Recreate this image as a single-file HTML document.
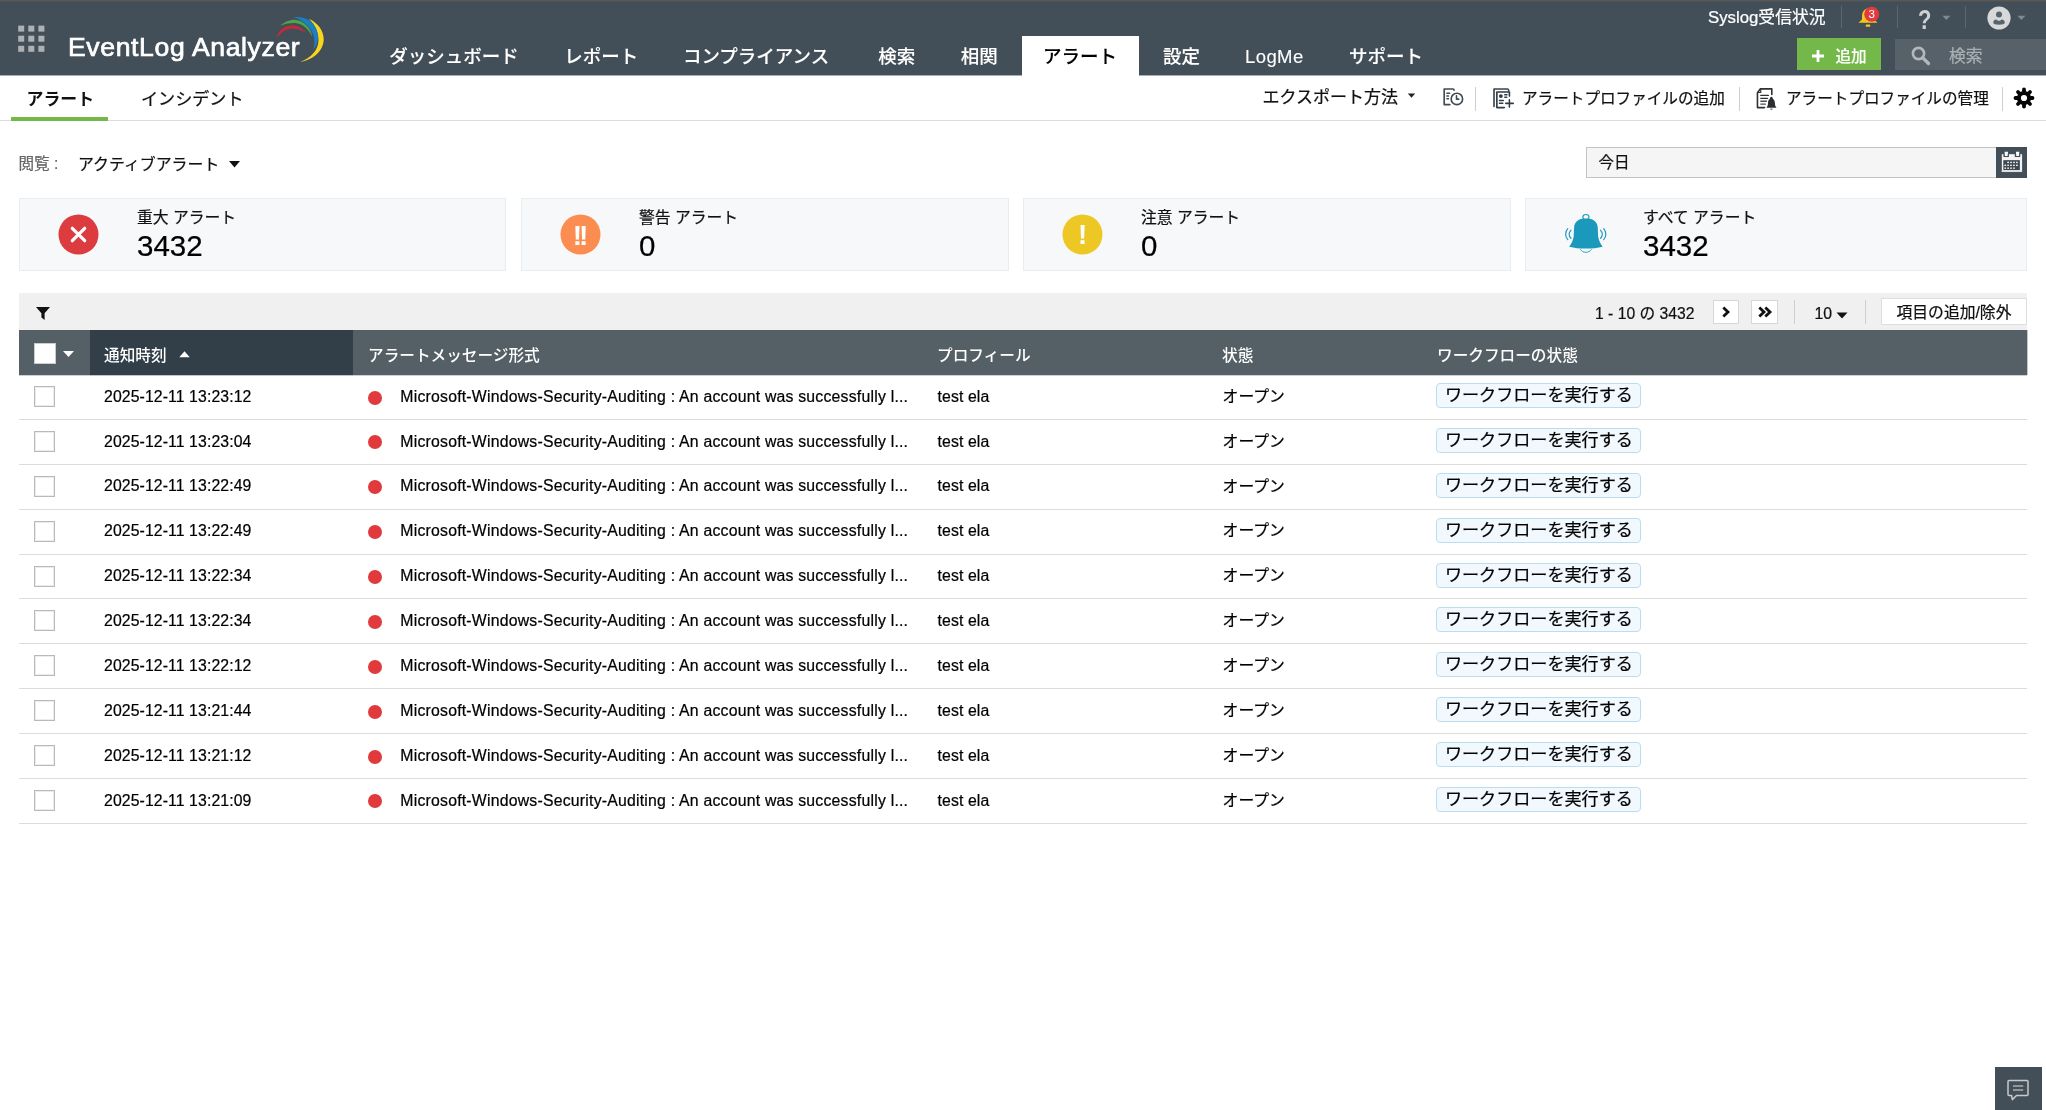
<!DOCTYPE html>
<html lang="ja">
<head>
<meta charset="utf-8">
<title>EventLog Analyzer</title>
<style>
*{box-sizing:border-box;margin:0;padding:0}
html,body{width:2046px;height:1110px;overflow:hidden;background:#fff}
body{position:relative;font-family:"Liberation Sans","Noto Sans CJK JP",sans-serif;color:#000;font-size:15.6px;line-height:1}
.a{position:absolute;white-space:nowrap}
.t{position:absolute;white-space:nowrap;line-height:1;-webkit-text-stroke:0.22px}
#hdr{left:0;top:0;width:2046px;height:75px;background:#434f58}
#topline{left:0;top:0;width:2046px;height:2px;background:linear-gradient(#585858 0 50%,#4d5254 50% 100%)}
.nav{color:#fff;font-size:18.5px;top:47.5px;font-weight:500;-webkit-text-stroke:0.1px}
#tab{left:1021.5px;top:35.6px;width:117px;height:40px;background:#fff}
.sep{width:1px;background:#5b666e}
#sub{left:0;top:75px;width:2046px;height:46px;background:#fff;border-bottom:1px solid #dcdcdc}
.card{top:198px;height:73px;background:#f7f8fa;border:1px solid #e8edf2}
.clab{font-size:15.8px;top:210.3px;color:#111}
.cnum{font-size:29.5px;top:230.8px;color:#000}
#tb{left:19px;top:293px;width:2008px;height:37px;background:#f0f0f0}
#th{left:19px;top:330px;width:2008px;height:45px;background:#555f66;box-shadow:1px 0 0 rgba(85,95,102,0.35)}
#ths{left:90px;top:330px;width:263px;height:45px;background:#323e48}
.h{color:#fff;font-size:15.65px;top:347.8px;font-weight:500;-webkit-text-stroke:0}
.row{left:19px;width:2008px;height:44px}
.line{left:19px;width:2008px;height:1px;background:#dcdcdc}
.row .t{top:13.7px;font-size:15.8px;color:#000}
.cb{position:absolute;left:15px;top:11px;width:21px;height:21px;border:1px solid #b9b9b9;background:#fff;box-shadow:inset 0 0 0 1px #ececec}
.dot{position:absolute;left:348.7px;top:15.5px;width:14px;height:14px;border-radius:50%;background:#e03a3c}
.wf{position:absolute;left:1417.4px;top:8px;width:205px;height:25px;border:1px solid #bcdcf0;border-radius:4px;background:#f2f9fe;font-size:17.1px;line-height:23.6px;text-align:center;white-space:nowrap;-webkit-text-stroke:0.22px}
#wrap{position:absolute;left:0;top:0;width:2046px;height:1110px;will-change:transform}
</style>
</head>
<body>
<div id="wrap">
<div class="a" id="hdr"></div>
<div class="a" id="topline"></div>
<svg class="a" style="left:18px;top:25px" width="27" height="27" viewBox="0 0 27 27"><g fill="#adb1b4"><rect x="0.2" y="0.6" width="6" height="6"/><rect x="10.3" y="0.6" width="6" height="6"/><rect x="20.4" y="0.6" width="6" height="6"/><rect x="0.2" y="10.7" width="6" height="6"/><rect x="10.3" y="10.7" width="6" height="6"/><rect x="20.4" y="10.7" width="6" height="6"/><rect x="0.2" y="20.8" width="6" height="6"/><rect x="10.3" y="20.8" width="6" height="6"/><rect x="20.4" y="20.8" width="6" height="6"/></g></svg>
<div class="t" id="logo" style="left:68px;top:33.5px;font-size:26.6px;font-weight:400;color:#fff;-webkit-text-stroke:0.7px #fff;letter-spacing:0.62px">EventLog Analyzer</div>
<svg class="a" id="swoosh" style="left:260px;top:8px" width="80" height="64" viewBox="0 0 1388 1110">
<path d="M850 185 C1010 260 1105 400 1105 540 C1105 730 930 900 700 932 C880 870 1015 730 1015 560 C1015 430 970 310 850 185Z" fill="#fad51e"/>
<path d="M585 158 C680 145 780 165 860 215 C960 290 1010 400 1005 520 C1002 600 975 670 925 725 C950 650 955 560 925 470 C880 340 760 220 585 158Z" fill="#1b7fc3"/>
<path d="M355 305 C420 245 510 205 600 205 C700 208 790 270 850 350 C885 400 900 450 905 495 C870 420 800 330 720 290 C640 250 560 255 480 268 C430 278 390 292 355 305Z" fill="#4ea548"/>
<path d="M292 522 C300 450 350 380 430 335 C500 300 580 295 650 318 C710 340 765 385 800 430 C740 395 680 368 610 358 C520 350 440 375 380 425 C345 455 315 490 292 522Z" fill="#c9283a"/>
</svg>
<div class="t nav" style="left:389.2px">ダッシュボード</div>
<div class="t nav" style="left:564.2px">レポート</div>
<div class="t nav" style="left:682.9px">コンプライアンス</div>
<div class="t nav" style="left:878.2px">検索</div>
<div class="t nav" style="left:960.7px">相関</div>
<div class="a" id="tab"></div>
<div class="t nav" style="left:1043px;color:#000">アラート</div>
<div class="t nav" style="left:1163px">設定</div>
<div class="t nav" style="left:1245px;letter-spacing:0.4px">LogMe</div>
<div class="t nav" style="left:1349px">サポート</div>
<div class="t" style="left:1708px;top:10px;font-size:16.8px;color:#fff">Syslog受信状況</div>
<div class="a sep" style="left:1841px;top:6px;height:22px"></div>
<div class="a sep" style="left:1897px;top:6px;height:22px"></div>
<div class="a sep" style="left:1965px;top:6px;height:22px"></div>
<svg class="a" style="left:1855px;top:5px" width="30" height="26" viewBox="0 0 30 26">
<path d="M13 3.200 C8.500 4 7 8 7 11.500 L7 14.500 L3.500 17.800 L22.500 17.800 L19 14.500 L19 11.500 C19 8 17.500 4 13 3.200Z" fill="#f5c71a"/>
<rect x="10.800" y="19.600" width="4.400" height="2.200" rx="0.600" fill="#f5c71a"/>
<circle cx="16.700" cy="9.300" r="7.500" fill="#e13b3f"/>
<text x="16.700" y="13.400" font-family="Liberation Sans, sans-serif" font-size="11.500" font-weight="400" fill="#fff" text-anchor="middle">3</text>
</svg>
<div class="t" style="left:1918.4px;top:5.5px;font-size:27.5px;color:#cdd1d3;font-weight:700;-webkit-text-stroke:0;transform:scaleX(0.8);transform-origin:0 0">?</div>
<svg class="a" style="left:1942px;top:15px" width="9" height="6" viewBox="0 0 9 6"><path d="M0.400 0.800 L8.400 0.800 L4.400 4.900Z" fill="#7f8990"/></svg>
<svg class="a" style="left:1987px;top:6px" width="24" height="24" viewBox="0 0 24 24"><circle cx="12" cy="12" r="11.600" fill="#d6d8da"/><circle cx="12" cy="8.400" r="3" fill="#59636b"/><path d="M6.200 16.800 C6.200 14.600 7.600 13.400 9.400 13.400 C10.200 14.300 11 14.700 12 14.700 C13 14.700 13.800 14.300 14.600 13.400 C16.400 13.400 17.800 14.600 17.800 16.800 C17.800 18 15.500 18.800 12 18.800 C8.500 18.800 6.200 18 6.200 16.800Z" fill="#59636b"/></svg>
<svg class="a" style="left:2017px;top:15px" width="9" height="6" viewBox="0 0 9 6"><path d="M0.400 0.800 L8.400 0.800 L4.400 4.900Z" fill="#7f8990"/></svg>
<div class="a" style="left:1797px;top:38px;width:84px;height:32px;background:#74b84a"></div>
<svg class="a" style="left:1811px;top:49px" width="14" height="14" viewBox="0 0 14 14"><path d="M5.600 1 h2.800 v4.600 h4.600 v2.800 h-4.600 v4.600 h-2.800 v-4.600 h-4.600 v-2.800 h4.600z" fill="#fff"/></svg>
<div class="t" style="left:1835.5px;top:48.5px;font-size:15.6px;font-weight:500;color:#fff;-webkit-text-stroke:0.1px">追加</div>
<div class="a" style="left:1895px;top:39px;width:151px;height:31px;background:#57616a"></div>
<svg class="a" style="left:1910px;top:45px" width="22" height="22" viewBox="0 0 22 22"><circle cx="8.5" cy="8.5" r="5.600" fill="none" stroke="#b3b8bc" stroke-width="2.6"/><path d="M12.800 12.800 L18.5 18.5" stroke="#b3b8bc" stroke-width="3.2" stroke-linecap="round"/></svg>
<div class="t" style="left:1949px;top:49.2px;font-size:16.8px;color:#a9b0b4">検索</div>
<div class="a" id="sub"></div>
<div class="t" style="left:26.5px;top:91.7px;font-size:16.9px;font-weight:700;color:#111;-webkit-text-stroke:0">アラート</div>
<div class="a" style="left:11px;top:117px;width:97px;height:4px;background:#75b84a"></div>
<div class="t" style="left:141px;top:91px;font-size:17.1px;color:#111">インシデント</div>
<div class="t" style="left:1262.4px;top:89px;font-size:17px;color:#111">エクスポート方法</div>
<svg class="a" style="left:1407px;top:93px" width="9" height="6" viewBox="0 0 9 6"><path d="M0.800 0.600 L8.200 0.600 L4.500 4.800Z" fill="#222"/></svg>
<svg class="a" style="left:1430px;top:80px" width="100" height="36" viewBox="0 0 2046 737"><g fill="none" stroke="#3f4a53" stroke-width="34" stroke-linecap="round" stroke-linejoin="round"><path d="M405 505 H290 V185 H470 Q492 185 492 210"/><path d="M345 270 H400 M345 327 H378 M345 385 H378" stroke-width="30"/><circle cx="550" cy="388" r="117"/><path d="M542 322 V392 H588" stroke-width="32"/><path d="M1310 540 V185 H1590 Q1612 190 1612 225" stroke="#3a444c"/><path d="M1625 330 V245 H1368 V565 H1520" stroke="#333c43"/><path d="M1530 300 H1575 M1530 355 H1570 M1420 420 H1500 M1420 475 H1490" stroke="#333c43" stroke-width="30"/><path d="M1625 405 V555 M1550 478 H1705" stroke="#333c43" stroke-width="32"/></g><circle cx="1450" cy="330" r="40" fill="#333c43"/></svg>
<div class="a" style="left:1475px;top:87px;width:1px;height:24px;background:#cfcfcf"></div>
<div class="t" style="left:1522px;top:90.8px;font-size:15.6px;color:#111">アラートプロファイルの追加</div>
<div class="a" style="left:1739px;top:87px;width:1px;height:24px;background:#cfcfcf"></div>
<svg class="a" style="left:1740px;top:80px" width="60" height="36" viewBox="0 0 1850 1110"><g fill="none" stroke="#2e3235" stroke-width="50" stroke-linecap="round" stroke-linejoin="round"><path d="M755 850 H538 V395 L630 272 H980 V445"/><path d="M640 290 V385 H550" stroke-width="36"/><path d="M640 475 H875 M640 565 H850" stroke-width="40"/><path d="M640 655 H815 M640 742 H785" stroke-width="40" stroke="#4a5157"/></g><path d="M968 520 C935 520 925 555 920 585 C870 610 862 680 862 730 C862 780 840 820 812 858 L1128 858 C1100 820 1078 780 1078 730 C1078 680 1065 610 1015 585 C1010 555 1000 520 968 520Z" fill="#2b2d2f"/><path d="M925 888 C940 925 995 925 1010 888Z" fill="#2b2d2f"/></svg>
<div class="t" style="left:1786px;top:90.8px;font-size:15.6px;color:#111">アラートプロファイルの管理</div>
<div class="a" style="left:2002px;top:87px;width:1px;height:24px;background:#cfcfcf"></div>
<svg class="a" style="left:2012.9px;top:87.2px" width="22" height="22" viewBox="0 0 22 22"><circle cx="11" cy="11" r="7.100" fill="#050505"/><path d="M11.00 6.00 L11.00 2.50 M14.54 7.46 L17.01 4.99 M16.00 11.00 L19.50 11.00 M14.54 14.54 L17.01 17.01 M11.00 16.00 L11.00 19.50 M7.46 14.54 L4.99 17.01 M6.00 11.00 L2.50 11.00 M7.46 7.46 L4.99 4.99" stroke="#050505" stroke-width="3.800" stroke-linecap="round" fill="none"/><circle cx="11" cy="11" r="3.100" fill="#fff"/></svg>
<div class="t" style="left:18.5px;top:156px;font-size:15.6px;color:#666">閲覧 :</div>
<div class="t" style="left:78px;top:156.5px;font-size:15.9px;color:#111">アクティブアラート</div>
<svg class="a" style="left:229px;top:161px" width="11" height="7" viewBox="0 0 11 7"><path d="M0 0 L11 0 L5.5 6.500Z" fill="#111"/></svg>
<div class="a" style="left:1586px;top:147px;width:411px;height:31px;background:#f5f5f5;border:1px solid #c3c3c3"></div>
<div class="t" style="left:1598.5px;top:154.8px;font-size:15.6px;color:#111">今日</div>
<div class="a" style="left:1996px;top:147px;width:31px;height:31px;background:#434f58"></div>
<svg class="a" style="left:1970px;top:140px" width="76" height="45" viewBox="0 0 1875 1110"><rect x="785" y="350" width="500" height="440" fill="#f4f4f4"/><rect x="785" y="745" width="500" height="45" fill="#dedede"/><rect x="822" y="497" width="408" height="243" fill="#3d4850"/><rect x="825" y="268" width="135" height="152" fill="#434f58"/><rect x="1105" y="268" width="135" height="152" fill="#434f58"/><path d="M852 290 H938 L928 392 H862Z M1132 290 H1218 L1208 392 H1142Z" fill="#fafafa"/><rect x="919" y="536" width="42" height="34" fill="#f2f2f2"/><rect x="991" y="536" width="42" height="34" fill="#f2f2f2"/><rect x="1064" y="536" width="42" height="34" fill="#f2f2f2"/><rect x="1136" y="536" width="42" height="34" fill="#f2f2f2"/><rect x="849" y="608" width="42" height="34" fill="#f2f2f2"/><rect x="919" y="608" width="42" height="34" fill="#f2f2f2"/><rect x="991" y="608" width="42" height="34" fill="#f2f2f2"/><rect x="1064" y="608" width="42" height="34" fill="#f2f2f2"/><rect x="1136" y="608" width="42" height="34" fill="#f2f2f2"/><rect x="849" y="678" width="42" height="34" fill="#f2f2f2"/><rect x="919" y="678" width="42" height="34" fill="#f2f2f2"/><rect x="991" y="678" width="42" height="34" fill="#f2f2f2"/><rect x="1064" y="678" width="42" height="34" fill="#f2f2f2"/></svg>
<div class="a card" style="left:19px;width:487px"></div>
<svg class="a" style="left:58px;top:214px" width="41" height="41" viewBox="0 0 41 41"><circle cx="20.5" cy="20.5" r="20" fill="#dc3c40"/><path d="M14.300 14.300 L26.700 26.700 M26.700 14.300 L14.300 26.700" stroke="#fff" stroke-width="3.200" stroke-linecap="round"/></svg>
<div class="t clab" style="left:137px">重大 アラート</div>
<div class="t cnum" style="left:137px">3432</div>
<div class="a card" style="left:521px;width:488px"></div>
<svg class="a" style="left:560px;top:214px" width="41" height="41" viewBox="0 0 41 41"><circle cx="20.5" cy="20.5" r="20" fill="#fa8d4f"/><text x="19" y="30.900" font-family="Liberation Sans, sans-serif" font-size="28" font-weight="700" fill="#fff" text-anchor="middle" letter-spacing="-3">!!</text></svg>
<div class="t clab" style="left:639px">警告 アラート</div>
<div class="t cnum" style="left:639px">0</div>
<div class="a card" style="left:1023px;width:488px"></div>
<svg class="a" style="left:1062px;top:214px" width="41" height="41" viewBox="0 0 41 41"><circle cx="20.5" cy="20.5" r="20" fill="#edc724"/><text x="20.500" y="30.100" font-family="Liberation Sans, sans-serif" font-size="27.500" font-weight="700" fill="#fff" text-anchor="middle">!</text></svg>
<div class="t clab" style="left:1141px">注意 アラート</div>
<div class="t cnum" style="left:1141px">0</div>
<div class="a card" style="left:1525px;width:502px"></div>
<svg class="a" style="left:1545px;top:200px" width="80" height="68" viewBox="0 0 1306 1110"><path d="M600 305 C520 325 478 380 475 450 L468 600 C455 660 430 720 395 762 C480 785 560 790 668 790 C776 790 856 785 941 762 C906 720 881 660 868 600 L861 450 C858 380 816 325 736 305Z" fill="#1a99bc"/><ellipse cx="668" cy="277" rx="50" ry="40" fill="none" stroke="#1a99bc" stroke-width="18"/><path d="M578 805 C610 870 726 870 758 805" fill="none" stroke="#1a99bc" stroke-width="15"/><g fill="none" stroke="#1a99bc" stroke-width="19" stroke-linecap="round"><path d="M372 468 C325 520 325 595 372 648"/><path d="M425 492 C385 535 385 585 425 625"/><path d="M905 492 C945 535 945 585 905 625"/><path d="M958 468 C1005 520 1005 595 958 648"/></g></svg>
<div class="t clab" style="left:1643px">すべて アラート</div>
<div class="t cnum" style="left:1643px">3432</div>
<div class="a" id="tb"></div>
<svg class="a" style="left:35px;top:306px" width="16" height="15" viewBox="0 0 16 15"><path d="M1 1 H15 L9.600 7.200 V14 L6.400 11.500 V7.200Z" fill="#111"/></svg>
<div class="t" style="left:1595px;top:306.4px;font-size:15.7px;color:#111">1 - 10 の 3432</div>
<div class="a" style="left:1713px;top:300px;width:26px;height:24px;background:#fff;border:1px solid #d7d7d7"></div>
<svg class="a" style="left:1720px;top:306px" width="12" height="13" viewBox="0 0 12 13"><path d="M3.300 1.600 L8 6 L3.300 10.400" fill="none" stroke="#111" stroke-width="2.800"/></svg>
<div class="a" style="left:1751px;top:300px;width:27px;height:24px;background:#fff;border:1px solid #d7d7d7"></div>
<svg class="a" style="left:1756px;top:306px" width="17" height="13" viewBox="0 0 17 13"><path d="M3.300 1.600 L8 6 L3.300 10.400 M9.300 1.600 L14 6 L9.300 10.400" fill="none" stroke="#111" stroke-width="2.800"/></svg>
<div class="a" style="left:1794px;top:300px;width:1px;height:24px;background:#cfcfcf"></div>
<div class="t" style="left:1814.5px;top:306.2px;font-size:15.8px;color:#111">10</div>
<svg class="a" style="left:1835.5px;top:312px" width="12" height="7" viewBox="0 0 12 7"><path d="M0.500 0.500 L11.500 0.500 L6 6.500Z" fill="#111"/></svg>
<div class="a" style="left:1865px;top:300px;width:1px;height:24px;background:#cfcfcf"></div>
<div class="a" style="left:1881px;top:298px;width:146px;height:27px;background:#fff;border:1px solid #dedede"></div>
<div class="t" style="left:1896.5px;top:305.3px;font-size:15.8px;color:#111">項目の追加/除外</div>
<div class="a" id="th"></div>
<div class="a" id="ths"></div>
<div class="a" style="left:34px;top:343px;width:22px;height:21px;background:#fff;border:1px solid #c9cdd0"></div>
<svg class="a" style="left:63px;top:351px" width="11" height="6" viewBox="0 0 11 6"><path d="M0 0 L11 0 L5.5 6Z" fill="#fff"/></svg>
<div class="t h" style="left:104px">通知時刻</div>
<svg class="a" style="left:179px;top:350.6px" width="11" height="7" viewBox="0 0 11 7"><path d="M0.300 6.300 L10.700 6.300 L5.500 0.200Z" fill="#fff"/></svg>
<div class="t h" style="left:368px">アラートメッセージ形式</div>
<div class="t h" style="left:937px">プロフィール</div>
<div class="t h" style="left:1222px">状態</div>
<div class="t h" style="left:1437px">ワークフローの状態</div>
<div class="a line" style="top:419px"></div>
<div class="a row" style="top:375.00px"><span class="cb"></span><span class="t" style="left:85px;letter-spacing:0.1px">2025-12-11 13:23:12</span><span class="dot"></span><span class="t" style="left:381.3px;letter-spacing:0.22px">Microsoft-Windows-Security-Auditing : An account was successfully l...</span><span class="t" style="left:918.5px;letter-spacing:0.12px">test ela</span><span class="t" style="left:1203.6px;top:13.8px">オープン</span><span class="wf">ワークフローを実行する</span></div>
<div class="a line" style="top:464px"></div>
<div class="a row" style="top:419.88px"><span class="cb"></span><span class="t" style="left:85px;letter-spacing:0.1px">2025-12-11 13:23:04</span><span class="dot"></span><span class="t" style="left:381.3px;letter-spacing:0.22px">Microsoft-Windows-Security-Auditing : An account was successfully l...</span><span class="t" style="left:918.5px;letter-spacing:0.12px">test ela</span><span class="t" style="left:1203.6px;top:13.8px">オープン</span><span class="wf">ワークフローを実行する</span></div>
<div class="a line" style="top:509px"></div>
<div class="a row" style="top:464.76px"><span class="cb"></span><span class="t" style="left:85px;letter-spacing:0.1px">2025-12-11 13:22:49</span><span class="dot"></span><span class="t" style="left:381.3px;letter-spacing:0.22px">Microsoft-Windows-Security-Auditing : An account was successfully l...</span><span class="t" style="left:918.5px;letter-spacing:0.12px">test ela</span><span class="t" style="left:1203.6px;top:13.8px">オープン</span><span class="wf">ワークフローを実行する</span></div>
<div class="a line" style="top:554px"></div>
<div class="a row" style="top:509.64px"><span class="cb"></span><span class="t" style="left:85px;letter-spacing:0.1px">2025-12-11 13:22:49</span><span class="dot"></span><span class="t" style="left:381.3px;letter-spacing:0.22px">Microsoft-Windows-Security-Auditing : An account was successfully l...</span><span class="t" style="left:918.5px;letter-spacing:0.12px">test ela</span><span class="t" style="left:1203.6px;top:13.8px">オープン</span><span class="wf">ワークフローを実行する</span></div>
<div class="a line" style="top:598px"></div>
<div class="a row" style="top:554.52px"><span class="cb"></span><span class="t" style="left:85px;letter-spacing:0.1px">2025-12-11 13:22:34</span><span class="dot"></span><span class="t" style="left:381.3px;letter-spacing:0.22px">Microsoft-Windows-Security-Auditing : An account was successfully l...</span><span class="t" style="left:918.5px;letter-spacing:0.12px">test ela</span><span class="t" style="left:1203.6px;top:13.8px">オープン</span><span class="wf">ワークフローを実行する</span></div>
<div class="a line" style="top:643px"></div>
<div class="a row" style="top:599.40px"><span class="cb"></span><span class="t" style="left:85px;letter-spacing:0.1px">2025-12-11 13:22:34</span><span class="dot"></span><span class="t" style="left:381.3px;letter-spacing:0.22px">Microsoft-Windows-Security-Auditing : An account was successfully l...</span><span class="t" style="left:918.5px;letter-spacing:0.12px">test ela</span><span class="t" style="left:1203.6px;top:13.8px">オープン</span><span class="wf">ワークフローを実行する</span></div>
<div class="a line" style="top:688px"></div>
<div class="a row" style="top:644.28px"><span class="cb"></span><span class="t" style="left:85px;letter-spacing:0.1px">2025-12-11 13:22:12</span><span class="dot"></span><span class="t" style="left:381.3px;letter-spacing:0.22px">Microsoft-Windows-Security-Auditing : An account was successfully l...</span><span class="t" style="left:918.5px;letter-spacing:0.12px">test ela</span><span class="t" style="left:1203.6px;top:13.8px">オープン</span><span class="wf">ワークフローを実行する</span></div>
<div class="a line" style="top:733px"></div>
<div class="a row" style="top:689.16px"><span class="cb"></span><span class="t" style="left:85px;letter-spacing:0.1px">2025-12-11 13:21:44</span><span class="dot"></span><span class="t" style="left:381.3px;letter-spacing:0.22px">Microsoft-Windows-Security-Auditing : An account was successfully l...</span><span class="t" style="left:918.5px;letter-spacing:0.12px">test ela</span><span class="t" style="left:1203.6px;top:13.8px">オープン</span><span class="wf">ワークフローを実行する</span></div>
<div class="a line" style="top:778px"></div>
<div class="a row" style="top:734.04px"><span class="cb"></span><span class="t" style="left:85px;letter-spacing:0.1px">2025-12-11 13:21:12</span><span class="dot"></span><span class="t" style="left:381.3px;letter-spacing:0.22px">Microsoft-Windows-Security-Auditing : An account was successfully l...</span><span class="t" style="left:918.5px;letter-spacing:0.12px">test ela</span><span class="t" style="left:1203.6px;top:13.8px">オープン</span><span class="wf">ワークフローを実行する</span></div>
<div class="a line" style="top:823px"></div>
<div class="a row" style="top:778.92px"><span class="cb"></span><span class="t" style="left:85px;letter-spacing:0.1px">2025-12-11 13:21:09</span><span class="dot"></span><span class="t" style="left:381.3px;letter-spacing:0.22px">Microsoft-Windows-Security-Auditing : An account was successfully l...</span><span class="t" style="left:918.5px;letter-spacing:0.12px">test ela</span><span class="t" style="left:1203.6px;top:13.8px">オープン</span><span class="wf">ワークフローを実行する</span></div>
<div class="a" style="left:0;top:75px;width:2046px;height:1px;background:#a8aeb2"></div>
<div class="a" style="left:1022px;top:75px;width:117px;height:1px;background:#fff"></div>
<div class="a" style="left:19px;top:375px;width:2008px;height:1px;background:#cdd0d2"></div>
<div class="a" style="left:90px;top:375px;width:263px;height:1px;background:#c2c5c8"></div>
<div class="a" style="left:1995px;top:1067px;width:47px;height:43px;background:#434f58"></div>
<svg class="a" style="left:2006px;top:1078px" width="24" height="24" viewBox="0 0 24 24"><path d="M3 2.500 H21 Q22 2.500 22 3.500 V16.500 Q22 17.500 21 17.500 H10.500 L6.300 21.600 L5.600 17.500 H3 Q2 17.500 2 16.500 V3.500 Q2 2.500 3 2.500Z" fill="none" stroke="#c6c9cc" stroke-width="1.500" stroke-linejoin="round"/><path d="M7 8 H17.200 M7 12 H17.200" stroke="#a9aeb2" stroke-width="1.500"/></svg>
</div>
</body>
</html>
